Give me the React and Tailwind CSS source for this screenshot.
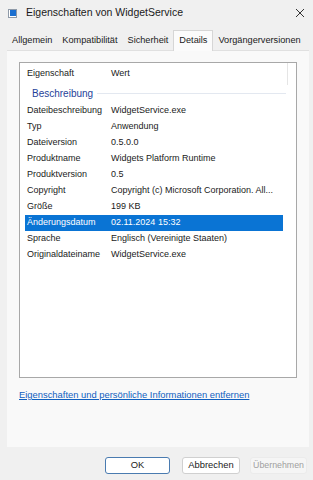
import React from "react";

const rows = [
  ["Dateibeschreibung", "WidgetService.exe"],
  ["Typ", "Anwendung"],
  ["Dateiversion", "0.5.0.0"],
  ["Produktname", "Widgets Platform Runtime"],
  ["Produktversion", "0.5"],
  ["Copyright", "Copyright (c) Microsoft Corporation. All..."],
  ["Größe", "199 KB"],
  ["Änderungsdatum", "02.11.2024 15:32", true],
  ["Sprache", "Englisch (Vereinigte Staaten)"],
  ["Originaldateiname", "WidgetService.exe"],
];

const tabs = ["Allgemein", "Kompatibilität", "Sicherheit", "Details", "Vorgängerversionen"];

export default function App() {
  return (
    <div
      className="w-[313px] h-[480px] bg-[#f0f0f0] flex flex-col text-[#1a1a1a] overflow-hidden"
      style={{ fontFamily: '"Liberation Sans", Arial, sans-serif' }}
    >
      {/* Title bar */}
      <div className="h-[26px] flex items-center pl-[8px] pr-[6px] shrink-0">
        <div className="w-[9px] h-[9px] border border-[#8f9aa8] bg-white flex items-center justify-center">
          <div className="w-[6px] h-[6px] bg-[#1a6fd0]" />
        </div>
        <div className="ml-[9px] text-[10.5px] text-[#1a1a1a]">Eigenschaften von WidgetService</div>
        <div className="ml-auto mr-[2px]">
          <svg width="10" height="10" viewBox="0 0 10 10">
            <path d="M1 1 L9 9 M9 1 L1 9" stroke="#333" strokeWidth="1" />
          </svg>
        </div>
      </div>

      {/* Tabs */}
      <div className="h-[24px] flex items-end pl-[7px] shrink-0 text-[9.2px]">
        {tabs.map((t) => {
          const sel = t === "Details";
          return (
            <div
              key={t}
              className={
                sel
                  ? "h-[21px] px-[5px] flex items-center bg-[#fbfbfb] border border-b-0 border-[#d6d6d6] -mb-px relative z-10"
                  : "h-[18px] px-[5px] flex items-center"
              }
            >
              {t}
            </div>
          );
        })}
      </div>

      {/* Panel */}
      <div className="mx-[7px] w-[302px] h-[397px] bg-[#f9f9f9] border-t border-[#e0e0e0] flex flex-col px-[12px] pt-[11px] shrink-0">
        <div className="h-[316px] bg-white border border-[#a8a8a8] flex flex-col text-[9px] pl-[5px]">
          {/* header */}
          <div className="h-[22px] flex items-center shrink-0">
            <div className="w-[85px] pl-[2px]">Eigenschaft</div>
            <div className="w-[178px] h-full flex items-center pl-[1px] border-r border-[#e5e5e5]">Wert</div>
          </div>
          {/* group */}
          <div className="h-[16px] flex items-center pl-[7px] pr-[10px]">
            <span className="text-[#1f3f99] text-[10px]">Beschreibung</span>
            <div className="flex-1 h-px bg-[#e3e8f0] ml-[4px]" />
          </div>
          <div className="h-[2px]" />
          {rows.map(([k, v, sel]) => (
            <div
              key={k}
              className={
                "h-[16px] w-[258px] flex items-center " +
                (sel ? "bg-[#0a74d4] text-white" : "")
              }
            >
              <div className="w-[86px] pl-[2px] whitespace-nowrap">{k}</div>
              <div className="whitespace-nowrap">{v}</div>
            </div>
          ))}
        </div>
        <div className="mt-[10px] text-[9.4px] text-[#1060c0] underline">
          Eigenschaften und persönliche Informationen entfernen
        </div>
      </div>

      {/* Buttons */}
      <div className="flex mt-[10px] text-[9.4px]">
        <div className="ml-[105px] w-[65px] h-[17px] rounded-[3px] border border-[#4a7bb0] bg-white flex items-center justify-center">
          OK
        </div>
        <div className="ml-[12px] w-[58px] h-[17px] rounded-[3px] border border-[#d0d0d0] bg-white flex items-center justify-center whitespace-nowrap">
          Abbrechen
        </div>
        <div className="ml-[10px] w-[57px] h-[17px] rounded-[3px] border border-[#ebebeb] bg-[#f5f5f5] text-[#a0a0a0] text-[8.8px] flex items-center justify-center whitespace-nowrap">
          Übernehmen
        </div>
      </div>
    </div>
  );
}
